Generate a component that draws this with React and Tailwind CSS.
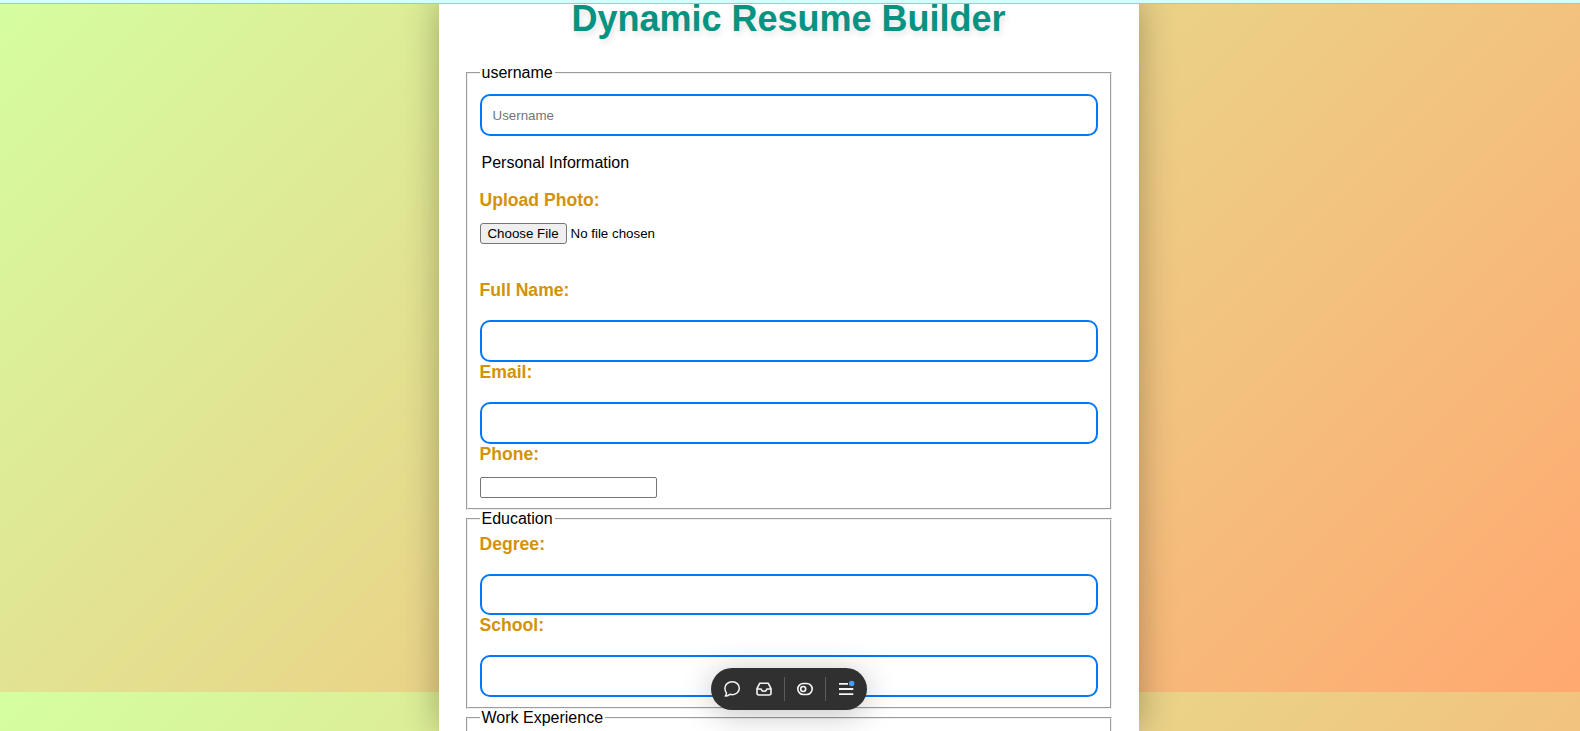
import React from "react";

const field = "block w-full rounded-[10px] border-2 border-[#0078f8] bg-white px-[11px] text-[13.333px] placeholder:text-[#757575] outline-none";
const label = "relative top-px block h-[21px] text-[17.6px] leading-[21px] font-bold text-[#d39208]";
const group = "mx-[27px] min-w-0 border-2 border-[#f0f0f0] [border-style:groove] px-3";
const legend = "h-[18px] px-[2px] text-[16px] leading-[18px] text-black";

function Toolbar() {
  return (
    <div className="absolute left-[711px] top-[668px] flex h-[42px] w-[156px] items-center rounded-full bg-[#303030] text-[#f5f5f5] shadow-[0_4px_32px_rgba(0,0,0,0.24)]">
      <svg className="ml-3 h-[18px] w-[18px]" viewBox="0 0 18 18" fill="none" stroke="currentColor" strokeWidth="1.5" strokeLinejoin="round">
        <path d="M9.3 1.8c4 0 7 2.8 7 6.4s-3 6.5-7 6.500c-.9 0-1.700-.1-2.500-.4-1.200 1-2.800 1.700-4.500 1.800.8-1 1.200-2 1.200-3.100-1-1.200-1.600-2.800-1.600-4.800 0-3.600 3.200-6.400 7.400-6.400Z" />
      </svg>
      <svg className="ml-[14px] h-[18px] w-[18px]" viewBox="0 0 18 18" fill="none" stroke="currentColor" strokeWidth="1.6" strokeLinejoin="round">
        <path d="M4.800 3.200h8.400l2.800 5.500v4.300a2 2 0 0 1-2 2H4a2 2 0 0 1-2-2V8.700L4.800 3.200ZM2 9h3.800c.5 0 .6.300.8.900.3.900 1 1.300 2.400 1.300s2.100-.4 2.400-1.300c.2-.6.300-.9.800-.9H16" />
      </svg>
      <span className="ml-[11px] h-6 w-px bg-[#5c5c5c]" />
      <svg className="ml-[11px] h-[18px] w-[18px]" viewBox="0 0 18 18" fill="none" stroke="currentColor" strokeWidth="1.6">
        <rect x="1.800" y="3.500" width="14.400" height="11" rx="5.500" />
        <circle cx="7.200" cy="9" r="2.500" />
      </svg>
      <span className="ml-[11px] h-6 w-px bg-[#5c5c5c]" />
      <svg className="ml-[11px] h-[18px] w-[20px]" viewBox="0 0 20 18" fill="none">
        <path d="M2 3.800h9M2 9h14.300M2 14.200h14.300" stroke="currentColor" strokeWidth="1.8" />
        <circle cx="14.700" cy="3.500" r="2.700" fill="#479cff" />
      </svg>
    </div>
  );
}

export default function App() {
  return (
    <div className="relative h-[731px] overflow-hidden bg-[linear-gradient(135deg,#d4ffa0,#ffa870)] [background-position:0_-39px] [background-size:100%_731px] font-['Liberation_Sans',Arial,sans-serif]">
      <main className="ml-[438.5px] flex h-[731px] w-[700px] flex-col bg-white shadow-[0_0_34px_rgba(0,0,0,0.3)]">
        <h1 className="h-16 pt-px text-center text-[36px] leading-[36px] font-bold text-[#079381] [text-shadow:2px_4px_6px_rgba(0,0,0,0.1)]">Dynamic Resume Builder</h1>
        <fieldset className={`${group} h-[446px]`}>
          <legend className={legend}>username</legend>
          <input className={`${field} mt-3 h-[42px]`} placeholder="Username" />
          <div className="mt-[18px] h-[18px] px-[2px] text-[16px] leading-[18px]">Personal Information</div>
          <label className={`${label} mt-[17px]`}>Upload Photo:</label>
          <div className="mt-[13px] flex h-[21px] items-center text-[13.333px]">
            <button className="h-[21px] w-[87px] rounded-[3px] border border-[#767676] bg-[#efefef] leading-[19px]">Choose File</button>
            <span className="ml-1">No file chosen</span>
          </div>
          <label className={`${label} mt-[35px]`}>Full Name:</label>
          <input className={`${field} mt-5 h-[42px]`} />
          <label className={`${label} mt-[-1px]`}>Email:</label>
          <input className={`${field} mt-5 h-[42px]`} />
          <label className={`${label} mt-[-1px]`}>Phone:</label>
          <input className="mt-[13px] block h-[21px] w-[177px] rounded-[2px] border border-[#767676]" />
        </fieldset>
        <fieldset className={`${group} h-[199px]`}>
          <legend className={legend}>Education</legend>
          <label className={`${label} mt-[5px]`}>Degree:</label>
          <input className={`${field} mt-5 h-[41px]`} />
          <label className={`${label} mt-[-1px]`}>School:</label>
          <input className={`${field} mt-5 h-[42px]`} />
        </fieldset>
        <fieldset className={`${group} h-[22px] border-b-0`}>
          <legend className={legend}>Work Experience</legend>
        </fieldset>
      </main>
      <div className="absolute inset-x-0 top-0 h-1 border-b border-[#9dcbc9] bg-[#d2fffb]" />
      <Toolbar />
    </div>
  );
}
